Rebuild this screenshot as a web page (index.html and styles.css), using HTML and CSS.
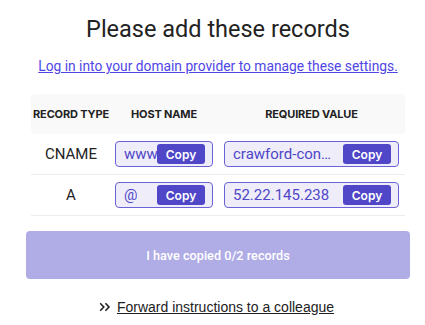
FILE: index.html
```html
<!DOCTYPE html>
<html lang="en">
<head>
    <meta charset="utf-8">
    <title>Please add these records</title>
    <link rel="stylesheet" href="styles.css">
</head>
<body>
    <div class="records">
        <h1 class="title">Please add these records</h1>
        <a class="provider-link" href="#">Log in into your domain provider to manage these settings.</a>

        <div class="table">
            <div class="row row--head">
                <div class="cell cell--type">RECORD TYPE</div>
                <div class="cell cell--host">HOST NAME</div>
                <div class="cell cell--value">REQUIRED VALUE</div>
            </div>
            <div class="row">
                <div class="cell cell--type">CNAME</div>
                <div class="cell cell--host">
                    <div class="field field--host">
                        <span class="field-text">www</span>
                        <button class="copy">Copy</button>
                    </div>
                </div>
                <div class="cell cell--value">
                    <div class="field field--value">
                        <span class="field-text">crawford-con…</span>
                        <button class="copy">Copy</button>
                    </div>
                </div>
            </div>
            <div class="row">
                <div class="cell cell--type">A</div>
                <div class="cell cell--host">
                    <div class="field field--host">
                        <span class="field-text">@</span>
                        <button class="copy">Copy</button>
                    </div>
                </div>
                <div class="cell cell--value">
                    <div class="field field--value">
                        <span class="field-text">52.22.145.238</span>
                        <button class="copy">Copy</button>
                    </div>
                </div>
            </div>
        </div>

        <button class="confirm" disabled>I have copied 0/2 records</button>

        <div class="forward">
            <svg class="forward-icon" width="12" height="10" viewBox="0 0 12 10">
                <path d="M1.2 1.3 L4.8 5 L1.2 8.7 M6.4 1.3 L10 5 L6.4 8.7" fill="none" stroke="#222" stroke-width="1.6"/>
            </svg>
            <a class="forward-link" href="#">Forward instructions to a colleague</a>
        </div>
    </div>
</body>
</html>
```

FILE: styles.css
```css
:root {
    --ff: 'Roboto', sans-serif;
    --ff-ui: 'Inter', sans-serif;
    --accent: #4f46c8;
    --accent-soft: #b0ace6;
    --field-bg: #eeedf9;
    --field-border: #6a62d6;
}

body {
    font-family: var(--ff);
    color: #222;

    margin: 0;
}

.records {
    width: 384px;
    margin: 0 0 0 26px;

    display: flex;
    flex-direction: column;
    align-items: center;
}

.title {
    font-size: 23.5px;
    font-weight: 400;
    line-height: 28px;

    margin: 15px 0 0;
}

.provider-link {
    font-size: 13.8px;
    line-height: 16px;
    color: #4f46e5;

    margin-top: 15px;
}

.table {
    width: 374px;
    margin-top: 20px;
}

.row {
    height: 40px;
    border-bottom: 1px solid #ececec;

    display: grid;
    grid-template-columns: 80px 106px 1fr;
    align-items: center;
}
.row--head {
    background-color: #f9f9f9;
    border-bottom: none;
    border-radius: 4px;
}

.cell {
    font-size: 15px;

    display: flex;
    justify-content: center;
}
.row--head .cell {
    font-family: var(--ff-ui);
    font-size: 11px;
    font-weight: 700;
    letter-spacing: -0.15px;
    color: #222;
}
.cell--value {
    padding-left: 1px;
}

.field {
    box-sizing: border-box;
    height: 26px;
    padding: 0 7px 0 8px;
    border: 1px solid var(--field-border);
    border-radius: 4px;
    background-color: var(--field-bg);
    color: var(--accent);

    display: flex;
    align-items: center;
    justify-content: space-between;
}
.field--host {
    width: 98px;
}
.field--value {
    width: 175px;
}
.field-text {
    font-size: 15px;
    white-space: nowrap;
    overflow: hidden;
}

.copy {
    font-family: var(--ff-ui);
    font-size: 12px;
    font-weight: 600;
    color: #fff;
    background-color: var(--accent);

    flex: none;
    width: 48px;
    height: 20px;
    padding: 0;
    border: none;
    border-radius: 3px;
}
.field--host .copy {
    margin-left: -8px;
}

.confirm {
    font-family: var(--ff);
    font-size: 12.7px;
    font-weight: 500;
    color: #fff;
    background-color: var(--accent-soft);

    width: 384px;
    height: 48px;
    margin-top: 15px;
    border: none;
    border-radius: 4px;
}

.forward {
    margin-top: 20px;

    display: flex;
    align-items: center;
    gap: 6px;
}
.forward-icon {
    display: block;
    margin-left: -3px;
}
.forward-link {
    font-family: 'Liberation Sans', sans-serif;
    font-size: 14px;
    color: #222;
}
```
